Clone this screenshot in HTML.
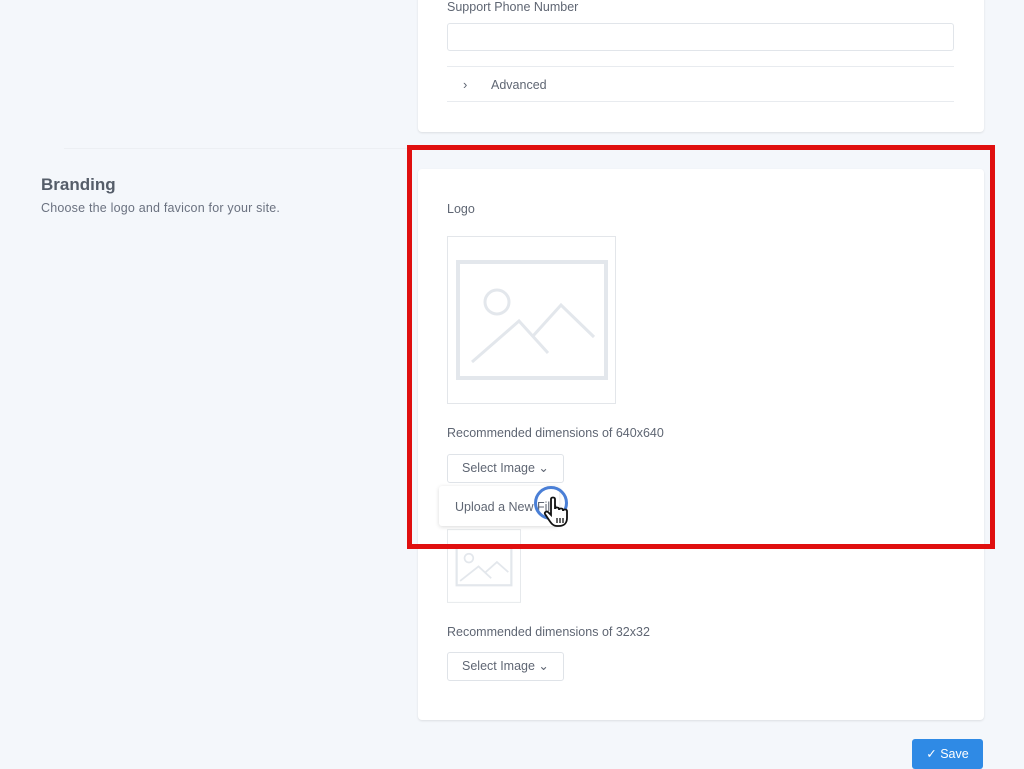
<!DOCTYPE html>
<html><head><meta charset="utf-8"><style>
*{box-sizing:border-box;margin:0;padding:0}
body{width:1024px;height:768px;background:#f4f7fb;font-family:"Liberation Sans",sans-serif;position:relative;overflow:hidden;color:#5f6673}
.card{position:absolute;background:#fff;border-radius:4px;box-shadow:0 1px 2px rgba(0,0,0,.1)}
.abs{position:absolute}
.lbl{position:absolute;font-size:12.5px;color:#5f6673}
.btn{position:absolute;border:1px solid #dfe3e8;border-radius:3px;background:#fff;font-size:12.5px;color:#5f6673;padding:0 14px;line-height:27px}
</style></head><body>
<div class="card" style="left:418px;top:-10px;width:566px;height:142px"></div>
<div class="lbl" style="left:447px;top:0px">Support Phone Number</div>
<div class="abs" style="left:447px;top:23px;width:507px;height:28px;border:1px solid #e1e5ea;border-radius:3px"></div>
<div class="abs" style="left:447px;top:66px;width:507px;height:1px;background:#e8ebef"></div>
<div class="abs" style="left:447px;top:101px;width:507px;height:1px;background:#e8ebef"></div>
<div class="lbl" style="left:463px;top:77px;font-size:13px">›</div>
<div class="lbl" style="left:491px;top:78px">Advanced</div>
<div class="abs" style="left:64px;top:148px;width:344px;height:1px;background:#eceff3"></div>
<div class="abs" style="left:41px;top:175px;font-size:17px;font-weight:bold;color:#555d69">Branding</div>
<div class="abs" style="left:41px;top:201px;font-size:12.5px;color:#6b7280;letter-spacing:0.2px">Choose the logo and favicon for your site.</div>
<div class="card" style="left:418px;top:169px;width:566px;height:551px"></div>
<div class="lbl" style="left:447px;top:202px">Logo</div>
<svg class="abs" style="left:447px;top:236px" width="169" height="168" viewBox="0 0 169 168">
<rect x="0.5" y="0.5" width="168" height="167" fill="#fff" stroke="#e3e6ea"/>
<rect x="11" y="26" width="148" height="116" fill="none" stroke="#e3e7ec" stroke-width="4"/>
<circle cx="50" cy="66" r="12" fill="none" stroke="#e3e7ec" stroke-width="3"/>
<polyline points="25,126 72,85 101,117" fill="none" stroke="#e3e7ec" stroke-width="3"/>
<polyline points="86,100 114,69 147,101" fill="none" stroke="#e3e7ec" stroke-width="3"/>
</svg>
<div class="lbl" style="left:447px;top:426px">Recommended dimensions of 640x640</div>
<div class="btn" style="left:447px;top:454px">Select Image ⌄</div>
<svg class="abs" style="left:447px;top:529px" width="74" height="74" viewBox="0 0 169 168">
<rect x="1" y="1" width="167" height="166" fill="#fff" stroke="#e3e6ea" stroke-width="2"/>
<rect x="22" y="40" width="125" height="88" fill="none" stroke="#e3e7ec" stroke-width="5"/>
<circle cx="50" cy="66" r="10" fill="none" stroke="#e3e7ec" stroke-width="4"/>
<polyline points="30,118 72,85 101,112" fill="none" stroke="#e3e7ec" stroke-width="4"/>
<polyline points="86,100 114,75 140,98" fill="none" stroke="#e3e7ec" stroke-width="4"/>
</svg>
<div class="abs" style="left:439px;top:486px;width:120px;height:40px;background:#fff;border-radius:3px;box-shadow:0 1px 4px rgba(0,0,0,.15)"></div>
<div class="lbl" style="left:455px;top:500px">Upload a New File</div>
<div class="abs" style="left:534px;top:486px;width:34px;height:34px;border:3px solid #4a7fd6;border-radius:50%"></div>
<svg class="abs" style="left:543px;top:496px" width="30" height="32" viewBox="0 0 30 32"><path d="M8 3c0-2 4-2 4 0v10c0-2 4-2 4 0v1c0-2 4-2 4 0v1c0-2 4-2 4 0v7c0 5-3 8-8 8h-2c-4 0-6-3-8-6l-4-6c-1-2 2-3 3-2l3 3z" fill="#fff" stroke="#111" stroke-width="1.8"/><path d="M14 22v5M17 22v5M20 22v5" stroke="#111" stroke-width="1.3"/></svg>
<div class="lbl" style="left:447px;top:625px">Recommended dimensions of 32x32</div>
<div class="btn" style="left:447px;top:652px">Select Image ⌄</div>
<div class="abs" style="left:407px;top:145px;width:588px;height:404px;border:5px solid #e00f0f"></div>
<div class="abs" style="left:912px;top:739px;width:71px;height:30px;background:#2f8ae5;border-radius:3px;color:#fff;font-size:12.5px;line-height:30px;text-align:center">✓ Save</div>
</body></html>
